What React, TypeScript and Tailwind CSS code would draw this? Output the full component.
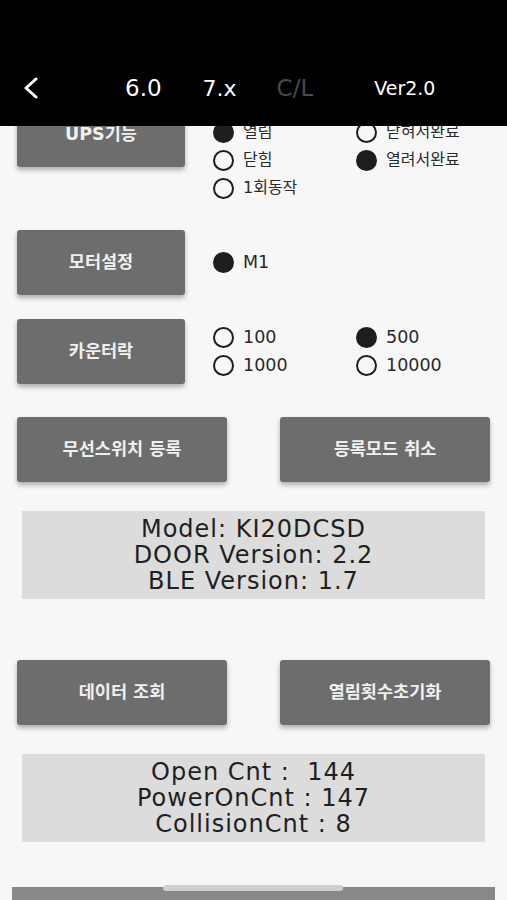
import React from 'react';

type Opt = { label: string; on: boolean };

const Radio: React.FC<Opt> = ({ label, on }) => (
  <div className="flex items-center h-[28px]">
    <span
      className={`w-[21px] h-[21px] rounded-full border-2 border-[#1e1e1e] ${on ? 'bg-[#1e1e1e]' : 'bg-transparent'}`}
    />
    <span className={`ml-[9px] text-[#2a2a2a] ${/[가-힣]/.test(label) ? 'text-[16px]' : 'text-[17.5px]'}`}>
      {label}
    </span>
  </div>
);

const RadioGrid: React.FC<{ opts: (Opt | null)[] }> = ({ opts }) => (
  <div className="grid grid-cols-[143px_auto]">
    {opts.map((o, i) => (o ? <Radio key={i} {...o} /> : <div key={i} />))}
  </div>
);

const Btn: React.FC<{ label: string; className?: string }> = ({ label, className = '' }) => (
  <button
    className={`h-[65px] rounded-[3px] bg-[#6d6d6d] text-[#f0f0f0] text-[17.5px] font-bold shadow-[0_3px_5px_rgba(0,0,0,0.3)] ${className}`}
  >
    {label}
  </button>
);

const InfoBox: React.FC<{ lines: string[]; className?: string }> = ({ lines, className = '' }) => (
  <div
    className={`mx-[22px] h-[88px] bg-[#dcdcdc] flex flex-col items-center justify-center text-[24px] leading-[26px] tracking-[1px] text-[#1f1f1f] ${className}`}
  >
    {lines.map((l) => (
      <div key={l} className="whitespace-pre">{l}</div>
    ))}
  </div>
);

export default function App() {
  return (
    <div
      className="relative w-full h-[900px] overflow-hidden bg-[#f7f7f7]"
      style={{ fontFamily: '"DejaVu Sans", "Noto Sans CJK KR", sans-serif' }}
    >
      <div className="pt-[102px]">
        {/* UPS */}
        <div className="flex items-start">
          <Btn label="UPS기능" className="ml-[17px] w-[168px]" />
          <div className="ml-[28px] mt-[16px]">
            <RadioGrid
              opts={[
                { label: '열림', on: true },
                { label: '닫혀서완료', on: false },
                { label: '닫힘', on: false },
                { label: '열려서완료', on: true },
                { label: '1회동작', on: false },
                null,
              ]}
            />
          </div>
        </div>

        {/* 모터 */}
        <div className="flex items-center mt-[28px]">
          <Btn label="모터설정" className="ml-[17px] w-[168px]" />
          <div className="ml-[28px]">
            <Radio label="M1" on />
          </div>
        </div>

        {/* 카운터락 */}
        <div className="flex items-center mt-[24px]">
          <Btn label="카운터락" className="ml-[17px] w-[168px]" />
          <div className="ml-[28px]">
            <RadioGrid
              opts={[
                { label: '100', on: false },
                { label: '500', on: true },
                { label: '1000', on: false },
                { label: '10000', on: false },
              ]}
            />
          </div>
        </div>

        <div className="flex justify-between px-[17px] mt-[33px]">
          <Btn label="무선스위치 등록" className="w-[210px]" />
          <Btn label="등록모드 취소" className="w-[210px]" />
        </div>

        <InfoBox className="mt-[29px]" lines={['Model: KI20DCSD', 'DOOR Version: 2.2', 'BLE Version: 1.7']} />

        <div className="flex justify-between px-[17px] mt-[61px]">
          <Btn label="데이터 조회" className="w-[210px]" />
          <Btn label="열림횟수초기화" className="w-[210px]" />
        </div>

        <InfoBox className="mt-[29px]" lines={['Open Cnt :  144', 'PowerOnCnt : 147', 'CollisionCnt : 8']} />

        <div className="relative mx-[12px] mt-[45px] h-[20px] bg-[#888888]">
          <div className="absolute left-[151px] -top-[2px] w-[180px] h-[6px] rounded-full bg-[#cfcfcf]" />
        </div>
      </div>

      {/* header overlay */}
      <div className="absolute top-0 left-0 right-0 h-[126px] bg-black">
        <div className="flex items-center h-[28px] mt-[74px] text-white">
          <svg className="ml-[22px]" width="18" height="22" viewBox="0 0 18 22" fill="none">
            <path d="M14 2 L4 11 L14 20" stroke="white" strokeWidth="3" strokeLinecap="round" strokeLinejoin="round" />
          </svg>
          <span className="ml-[85px] text-[23px]">6.0</span>
          <span className="ml-[41px] text-[22px]">7.x</span>
          <span className="ml-[40px] text-[23px] text-[#4a4a4a]">C/L</span>
          <span className="ml-[61px] text-[19px]">Ver2.0</span>
        </div>
      </div>
    </div>
  );
}
